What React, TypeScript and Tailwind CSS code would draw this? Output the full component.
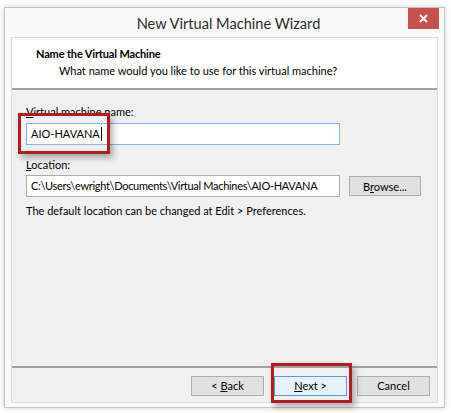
import React from "react";

const font = { fontFamily: 'Lato, "Noto Sans", sans-serif' };

function WinButton({ children, focused }: { children: React.ReactNode; focused?: boolean }) {
  return (
    <button
      className={
        "h-[20px] w-[73px] border text-[11px] text-black leading-[18px] text-center whitespace-pre " +
        (focused ? "border-[#5b9bd5] bg-[#e5f1fb]" : "border-[#adadad] bg-[#e1e1e1]")
      }
    >
      {children}
    </button>
  );
}

export default function App() {
  return (
    <div className="w-[451px] h-[413px] bg-white pt-[7px] pl-[4px] overflow-hidden" style={font}>
      <div className="relative w-[441px] h-[401px] bg-[#fafafa] border border-[#c3c3c3] shadow-[0_0_6px_rgba(0,0,0,0.18)] flex flex-col">
        {/* title bar */}
        <div className="h-[29px] flex items-start justify-center relative">
          <div className="text-[14.6px] text-[#2b2b2b] mt-[5px] ml-[8px]">New Virtual Machine Wizard</div>
          <div className="absolute right-[5px] top-0 w-[31px] h-[21px] bg-[#c75050] flex items-center justify-center">
            <svg width="9" height="9" viewBox="0 0 9 9">
              <path d="M1 1 L8 8 M8 1 L1 8" stroke="white" strokeWidth="1.8" />
            </svg>
          </div>
        </div>

        {/* inner panel */}
        <div className="mx-[6px] h-[366px] border border-[#dadada] flex flex-col">
          <div className="h-[52px] bg-white border-b-2 border-[#a0a0a0] pl-[24px] pt-[8px]">
            <div className="text-[11px] font-bold text-black leading-[16px] tracking-[-0.15px]">Name the Virtual Machine</div>
            <div className="text-[11px] text-black leading-[16px] pl-[23px] mt-[1px]">
              What name would you like to use for this virtual machine?
            </div>
          </div>

          <div className="flex-1 bg-[#f0f0f0] border-b-2 border-[#a0a0a0] pl-[14px] pt-[14px] text-[11px] text-black">
            <div className="leading-[16px]">
              <span className="underline">V</span>irtual machine name:
            </div>
            <div className="mt-[3px] w-[314px] h-[22px] bg-white border border-[#7eb4ea] flex items-center pl-[4px]">
              AIO-HAVANA<span className="inline-block w-[1px] h-[14px] bg-black ml-[1px]" />
            </div>
            <div className="mt-[12px] leading-[16px]">
              <span className="underline">L</span>ocation:
            </div>
            <div className="mt-[2px] flex items-center gap-[9px]">
              <div className="w-[314px] h-[22px] bg-white border border-[#acacac] flex items-center pl-[4px] whitespace-nowrap overflow-hidden tracking-[-0.3px]">
                C:\Users\ewright\Documents\Virtual Machines\AIO-HAVANA
              </div>
              <button className="h-[20px] w-[72px] border border-[#adadad] bg-[#e1e1e1] text-[11px] leading-none">
                B<span className="underline">r</span>owse...
              </button>
            </div>
            <div className="mt-[6px] leading-[16px]">The default location can be changed at Edit &gt; Preferences.</div>
          </div>

          <div className="h-[34px] bg-[#f0f0f0] flex items-start justify-end gap-[10px] pr-[7px] pt-[8px]">
            <WinButton>
              {"< "}
              <span className="underline">B</span>ack
            </WinButton>
            <WinButton focused>
              <span className="underline">N</span>ext &gt;
            </WinButton>
            <WinButton>Cancel</WinButton>
          </div>
        </div>

        {/* annotation boxes */}
        <div className="absolute left-[13px] top-[105px] w-[92px] h-[41px] border-[3px] border-[#b71c1c] shadow-[3px_4px_6px_rgba(0,0,0,0.3)]" />
        <div className="absolute left-[266px] top-[355px] w-[81px] h-[40px] border-[3px] border-[#b71c1c] shadow-[3px_4px_6px_rgba(0,0,0,0.3)]" />
      </div>
    </div>
  );
}
